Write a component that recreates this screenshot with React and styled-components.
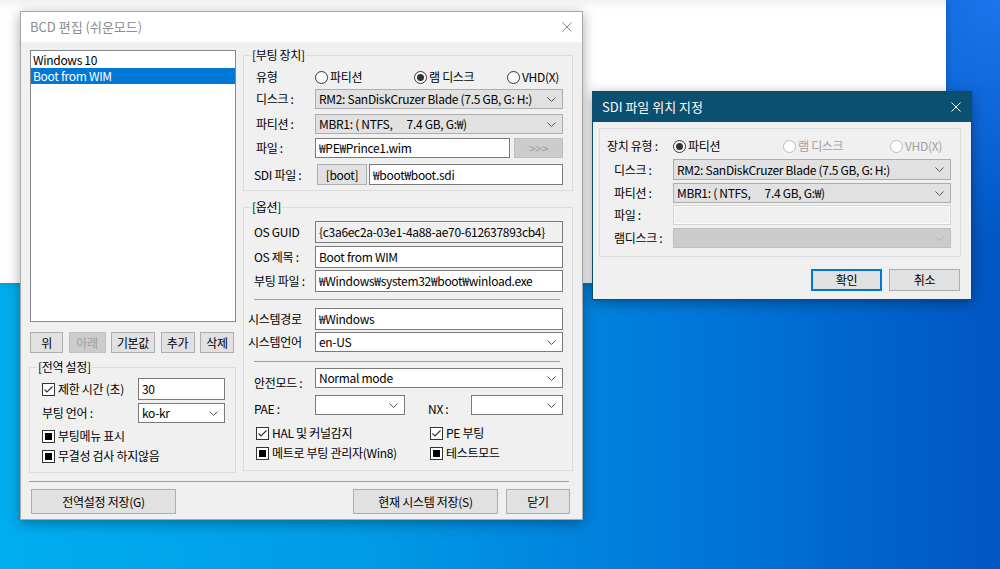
import React from 'react'
import styled, { createGlobalStyle } from 'styled-components'

const GlobalStyle = createGlobalStyle`
  html, body {
    margin: 0;
    padding: 0;
  }
  body {
    font-family: "Noto Sans CJK KR", "Noto Sans", sans-serif;
    font-size: 12px;
    line-height: 16px;
    letter-spacing: -0.3px;
    color: #000;
  }
`

const Desktop = styled.div`
  position: relative;
  width: 1000px;
  height: 569px;
  overflow: hidden;
  background:
    radial-gradient(circle at 100% 0%, rgba(30, 120, 240, 0.9) 0, rgba(30, 120, 240, 0) 240px),
    linear-gradient(90deg, #00aeef 0%, #009ce6 35%, #0079da 68%, #0056c4 100%);
`

const BackWindow = styled.div`
  position: absolute;
  left: 0;
  top: 0;
  width: 946px;
  height: 283px;
  background: linear-gradient(180deg, #f2f2f2 0, #ffffff 10px);
  box-shadow: 0 0 8px rgba(0, 0, 0, 0.2);
`

const Window = styled.div`
  position: absolute;
  left: ${p => p.$x}px;
  top: ${p => p.$y}px;
  width: ${p => p.$w}px;
  height: ${p => p.$h}px;
  box-sizing: border-box;
  display: flex;
  flex-direction: column;
  background: #f0f0f0;
  border: 1px solid ${p => (p.$active ? '#0b4c6d' : '#a8a8a8')};
  box-shadow: 0 3px 12px rgba(0, 0, 0, 0.35);
`

const TitleBar = styled.div`
  flex: none;
  height: 30px;
  display: flex;
  align-items: center;
  justify-content: space-between;
  padding: 0 10px 0 9px;
  font-size: 13px;
  letter-spacing: 0;
  background: ${p => (p.$active ? '#0b4f71' : '#ffffff')};
  color: ${p => (p.$active ? '#ffffff' : '#8c8c8c')};
`

const MainBody = styled.div`
  flex: 1;
  display: flex;
  flex-direction: column;
  padding: 8px 9px 0 8px;
`

const DialogBody = styled.div`
  flex: 1;
  display: flex;
  flex-direction: column;
  padding: 6px 10px 0 6px;
`

const Columns = styled.div`
  display: grid;
  grid-template-columns: 207px 330px;
  column-gap: 7px;
  align-items: start;
`

const Column = styled.div`
  display: flex;
  flex-direction: column;
`

const ListBox = styled.div`
  box-sizing: border-box;
  height: 272px;
  margin-left: 1px;
  padding-top: 1px;
  background: #fff;
  border: 1px solid #828790;
`

const ListItem = styled.div`
  height: 16px;
  padding-left: 2px;
  background: ${p => (p.$selected ? '#0078d7' : 'transparent')};
  color: ${p => (p.$selected ? '#fff' : '#000')};
`

const ButtonRow = styled.div`
  display: flex;
  justify-content: ${p => p.$justify || 'space-between'};
  gap: ${p => p.$gap || 0}px;
  height: ${p => p.$h}px;
  margin-top: ${p => p.$mt || 0}px;
  padding: ${p => p.$pad || 0};
`

const Button = styled.div`
  box-sizing: border-box;
  flex: none;
  width: ${p => p.$w}px;
  height: 100%;
  display: flex;
  align-items: center;
  justify-content: center;
  margin-left: ${p => p.$ml || 0}px;
  margin-right: ${p => p.$mr || 0}px;
  background: ${p => (p.$disabled ? '#cccccc' : '#e1e1e1')};
  border: ${p => (p.$default ? '2px solid #0078d7' : `1px solid ${p.$disabled ? '#bfbfbf' : '#adadad'}`)};
  color: ${p => (p.$disabled ? '#a0a0a0' : '#000')};
  white-space: nowrap;
`

const Spacer = styled.div`
  flex: 1;
`

const Group = styled.div`
  position: relative;
  box-sizing: border-box;
  display: flex;
  flex-direction: column;
  margin-top: ${p => p.$mt || 0}px;
  padding: ${p => p.$pad};
  border: 1px solid #dcdcdc;
`

const GroupLabel = styled.span`
  position: absolute;
  top: -9px;
  left: 7px;
  padding: 0 1px;
  background: #f0f0f0;
  white-space: nowrap;
`

const Row = styled.div`
  display: flex;
  align-items: center;
  height: ${p => p.$h || 20}px;
  margin-top: ${p => p.$mt || 0}px;
  margin-left: ${p => p.$ml || 0}px;
`

const Label = styled.span`
  flex: none;
  box-sizing: border-box;
  width: ${p => p.$w}px;
  margin-left: ${p => p.$ml || 0}px;
  padding-top: ${p => p.$dy || 0}px;
  white-space: nowrap;
`

const Field = styled.div`
  box-sizing: border-box;
  flex: ${p => (p.$w ? 'none' : '1 1 0')};
  width: ${p => (p.$w ? `${p.$w}px` : 'auto')};
  height: 100%;
  display: flex;
  align-items: center;
  margin-left: ${p => p.$ml || 0}px;
  padding: 0 3px;
  background: ${p => (p.$disabled || p.$readonly ? '#f0f0f0' : '#ffffff')};
  border: 1px solid ${p => (p.$disabled ? '#d4d4d4' : '#7a7a7a')};
  box-shadow: ${p => (p.$disabled ? 'inset 0 0 0 1px #fafafa' : 'none')};
  white-space: nowrap;
  overflow: hidden;
`

const comboColors = {
  grey: { bg: '#e1e1e1', border: '#adadad', arrow: '#555' },
  white: { bg: '#ffffff', border: '#7a7a7a', arrow: '#555' },
  disabled: { bg: '#cccccc', border: '#bfbfbf', arrow: '#b0b0b0' }
}

const ComboBox = styled.div`
  box-sizing: border-box;
  flex: ${p => (p.$w ? 'none' : '1 1 0')};
  width: ${p => (p.$w ? `${p.$w}px` : 'auto')};
  height: 100%;
  display: flex;
  align-items: center;
  justify-content: space-between;
  margin-left: ${p => p.$ml || 0}px;
  padding: 0 6px 0 3px;
  background: ${p => comboColors[p.$variant].bg};
  border: 1px solid ${p => comboColors[p.$variant].border};
  white-space: nowrap;
  overflow: hidden;
`

const ComboText = styled.span`
  flex: 1;
  overflow: hidden;
`

const Separator = styled.div`
  flex: none;
  height: 1px;
  background: #a0a0a0;
  margin: ${p => p.$m};
`

const Option = styled.div`
  flex: none;
  display: flex;
  align-items: center;
  gap: ${p => p.$gap || 2}px;
  width: ${p => (p.$w ? `${p.$w}px` : 'auto')};
  color: ${p => (p.$disabled ? '#a0a0a0' : '#000')};
  white-space: nowrap;
`

const Circle = styled.span`
  box-sizing: border-box;
  flex: none;
  width: 13px;
  height: 13px;
  border-radius: 50%;
  border: 1px solid ${p => (p.$disabled ? '#bcbcbc' : '#333')};
  background: #fff;
  display: flex;
  align-items: center;
  justify-content: center;
  &::after {
    content: '';
    display: ${p => (p.$checked ? 'block' : 'none')};
    width: 7px;
    height: 7px;
    border-radius: 50%;
    background: #333;
  }
`

const Box = styled.span`
  box-sizing: border-box;
  flex: none;
  width: 13px;
  height: 13px;
  border: 1px solid #333;
  background: #fff;
  display: flex;
  align-items: center;
  justify-content: center;
`

const MixedMark = styled.span`
  width: 7px;
  height: 7px;
  background: #000;
`

const CheckGrid = styled.div`
  display: grid;
  grid-template-columns: 174px 1fr;
  margin-left: 2px;
`

const Chevron = ({ color }) => (
  <svg width="9" height="5" viewBox="0 0 9 5">
    <path d="M0.5 0.5 L4.5 4.5 L8.5 0.5" fill="none" stroke={color} strokeWidth="1" />
  </svg>
)

const CloseIcon = ({ color }) => (
  <svg width="10" height="10" viewBox="0 0 10 10">
    <path d="M0.5 0.5 L9.5 9.5 M9.5 0.5 L0.5 9.5" fill="none" stroke={color} strokeWidth="1" />
  </svg>
)

const Combo = ({ variant = 'grey', w, ml, children }) => (
  <ComboBox $variant={variant} $w={w} $ml={ml}>
    <ComboText>{children}</ComboText>
    <Chevron color={comboColors[variant].arrow} />
  </ComboBox>
)

const Radio = ({ checked, disabled, w, children }) => (
  <Option $w={w} $disabled={disabled}>
    <Circle $checked={checked} $disabled={disabled} />
    {children}
  </Option>
)

const Check = ({ state, children }) => (
  <Option $gap={3}>
    <Box>
      {state === 'checked' && (
        <svg width="11" height="11" viewBox="0 0 11 11">
          <path d="M1.5 5.5 L4 8 L9.5 2.5" fill="none" stroke="#333" strokeWidth="1.2" />
        </svg>
      )}
      {state === 'mixed' && <MixedMark />}
    </Box>
    {children}
  </Option>
)

const PARTITION = 'MBR1: ( NTFS,\u3000 7.4 GB, G:₩)'

const MainWindow = () => (
  <Window $x={20} $y={11} $w={563} $h={509}>
    <TitleBar>
      <span>BCD 편집 (쉬운모드)</span>
      <CloseIcon color="#8a8a8a" />
    </TitleBar>
    <MainBody>
      <Columns>
        <Column>
          <ListBox>
            <ListItem>Windows 10</ListItem>
            <ListItem $selected>Boot from WIM</ListItem>
          </ListBox>
          <ButtonRow $h={21} $mt={10} $pad="0 2px 0 1px">
            <Button $w={33}>위</Button>
            <Button $w={37} $disabled>아래</Button>
            <Button $w={44}>기본값</Button>
            <Button $w={34}>추가</Button>
            <Button $w={34}>삭제</Button>
          </ButtonRow>
          <Group $mt={14} $pad="0 11px 8px 12px">
            <GroupLabel>[전역 설정]</GroupLabel>
            <Row $h={22} $mt={10}>
              <Label $w={96}>
                <Check state="checked">제한 시간 (초)</Check>
              </Label>
              <Field $w={87}>30</Field>
            </Row>
            <Row $h={20} $mt={3}>
              <Label $w={96}>부팅 언어 :</Label>
              <Combo variant="white" w={87}>ko-kr</Combo>
            </Row>
            <Row $h={16} $mt={5}>
              <Check state="mixed">부팅메뉴 표시</Check>
            </Row>
            <Row $h={16} $mt={4}>
              <Check state="mixed">무결성 검사 하지않음</Check>
            </Row>
          </Group>
        </Column>

        <Column>
          <Group $mt={5} $pad="0 9px 5px 12px">
            <GroupLabel>[부팅 장치]</GroupLabel>
            <Row $h={22} $mt={10}>
              <Label $w={59}>유형</Label>
              <Radio w={99}>파티션</Radio>
              <Radio w={93} checked>램 디스크</Radio>
              <Radio>VHD(X)</Radio>
            </Row>
            <Row $h={20} $mt={1}>
              <Label $w={59}>디스크 :</Label>
              <Combo>RM2: SanDiskCruzer Blade (7.5 GB, G: H:)</Combo>
            </Row>
            <Row $h={20} $mt={5}>
              <Label $w={59}>파티션 :</Label>
              <Combo>{PARTITION}</Combo>
            </Row>
            <Row $h={20} $mt={4}>
              <Label $w={59}>파일 :</Label>
              <Field $w={195}>₩PE₩Prince1.wim</Field>
              <Button $w={49} $ml={4} $disabled>&gt;&gt;&gt;</Button>
            </Row>
            <Row $h={21} $mt={6}>
              <Label $w={63} $ml={-2}>SDI 파일 :</Label>
              <Button $w={50}>[boot]</Button>
              <Field $ml={2}>₩boot₩boot.sdi</Field>
            </Row>
          </Group>

          <Group $mt={16} $pad="0 9px 9px 10px">
            <GroupLabel>[옵션]</GroupLabel>
            <Row $h={22} $mt={13}>
              <Label $w={61}>OS GUID</Label>
              <Field $readonly>{'{c3a6ec2a-03e1-4a88-ae70-612637893cb4}'}</Field>
            </Row>
            <Row $h={22} $mt={3}>
              <Label $w={61}>OS 제목 :</Label>
              <Field>Boot from WIM</Field>
            </Row>
            <Row $h={22} $mt={2}>
              <Label $w={61}>부팅 파일 :</Label>
              <Field>₩Windows₩system32₩boot₩winload.exe</Field>
            </Row>
            <Separator $m="7px 3px 0 0" />
            <Row $h={22} $mt={8}>
              <Label $w={67} $ml={-6}>시스템경로</Label>
              <Field>₩Windows</Field>
            </Row>
            <Row $h={20} $mt={2}>
              <Label $w={67} $ml={-6}>시스템언어</Label>
              <Combo variant="white">en-US</Combo>
            </Row>
            <Separator $m="9px 3px 0 0" />
            <Row $h={20} $mt={6}>
              <Label $w={61} $dy={10}>안전모드 :</Label>
              <Combo variant="white">Normal mode</Combo>
            </Row>
            <Row $h={20} $mt={7}>
              <Label $w={61} $dy={7}>PAE :</Label>
              <Combo variant="white" w={90}>&nbsp;</Combo>
              <Label $w={43} $ml={23} $dy={7}>NX :</Label>
              <Combo variant="white">&nbsp;</Combo>
            </Row>
            <CheckGrid>
              <Row $h={16} $mt={10}>
                <Check state="checked">HAL 및 커널감지</Check>
              </Row>
              <Row $h={16} $mt={10}>
                <Check state="checked">PE 부팅</Check>
              </Row>
              <Row $h={16} $mt={4}>
                <Check state="mixed">메트로 부팅 관리자(Win8)</Check>
              </Row>
              <Row $h={16} $mt={4}>
                <Check state="mixed">테스트모드</Check>
              </Row>
            </CheckGrid>
          </Group>
        </Column>
      </Columns>

      <Separator $m="8px 4px 0 0" />
      <ButtonRow $h={25} $mt={7} $justify="flex-start">
        <Button $w={145} $ml={2}>전역설정 저장(G)</Button>
        <Spacer />
        <Button $w={145}>현재 시스템 저장(S)</Button>
        <Button $w={64} $ml={8} $mr={3}>닫기</Button>
      </ButtonRow>
    </MainBody>
  </Window>
)

const SdiWindow = () => (
  <Window $x={592} $y={91} $w={380} $h={209} $active>
    <TitleBar $active>
      <span>SDI 파일 위치 지정</span>
      <CloseIcon color="#ffffff" />
    </TitleBar>
    <DialogBody>
      <Group $pad="0 9px 8px 14px">
        <Row $h={20} $mt={7}>
          <Label $w={66} $ml={-7}>장치 유형 :</Label>
          <Radio w={110} checked>파티션</Radio>
          <Radio w={107} disabled>램 디스크</Radio>
          <Radio disabled>VHD(X)</Radio>
        </Row>
        <Row $h={21} $mt={3}>
          <Label $w={59}>디스크 :</Label>
          <Combo>RM2: SanDiskCruzer Blade (7.5 GB, G: H:)</Combo>
        </Row>
        <Row $h={20} $mt={3}>
          <Label $w={59}>파티션 :</Label>
          <Combo>{PARTITION}</Combo>
        </Row>
        <Row $h={20} $mt={2}>
          <Label $w={59}>파일 :</Label>
          <Field $disabled />
        </Row>
        <Row $h={20} $mt={3}>
          <Label $w={59}>램디스크 :</Label>
          <Combo variant="disabled">&nbsp;</Combo>
        </Row>
      </Group>
      <ButtonRow $h={22} $mt={12} $justify="flex-end" $gap={7} $pad="0 1px 0 0">
        <Button $w={71} $default>확인</Button>
        <Button $w={71}>취소</Button>
      </ButtonRow>
    </DialogBody>
  </Window>
)

export default function App() {
  return (
    <>
      <GlobalStyle />
      <Desktop>
        <BackWindow />
        <MainWindow />
        <SdiWindow />
      </Desktop>
    </>
  )
}
